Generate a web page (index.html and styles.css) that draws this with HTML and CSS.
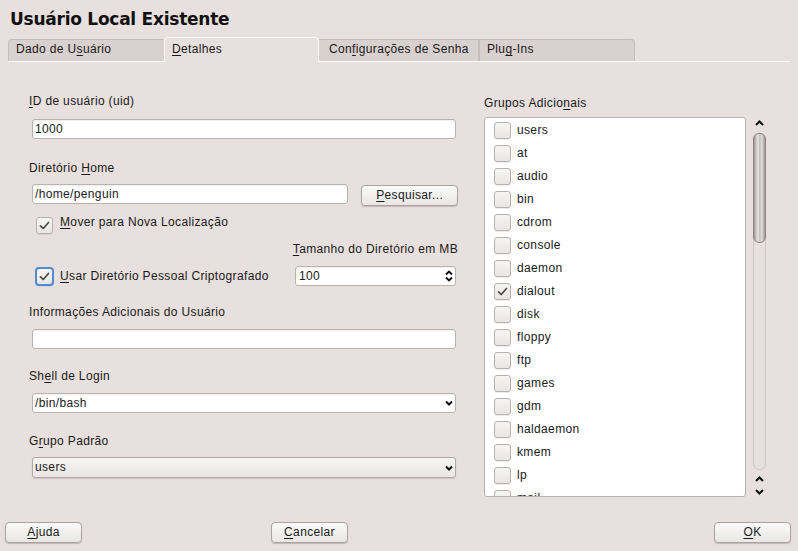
FILE: index.html
```html
<!DOCTYPE html>
<html lang="pt">
<head>
<meta charset="utf-8">
<title>Usuário Local Existente</title>
<link rel="stylesheet" href="styles.css">
</head>
<body>
<div class="win">
  <h1 class="title">Usuário Local Existente</h1>
  <div class="tabs">
    <div class="tab t1">Dado de U<u>s</u>uário</div>
    <div class="tab active t2"><u>D</u>etalhes</div>
    <div class="tab t3">Con<u>f</u>igurações de Senha</div>
    <div class="tab t4">Plu<u>g</u>-Ins</div>
  </div>
  <div class="panel">
    <div class="left">
      <div class="lbl"><u>I</u>D de usuário (uid)</div>
      <div class="input m10">1000</div>
      <div class="lbl m22">Diretório <u>H</u>ome</div>
      <div class="row m8">
        <div class="input short">/home/penguin</div>
        <div class="btn browse"><span><u>P</u>esquisar...</span></div>
      </div>
      <div class="cbrow m9">
        <div class="cbwrap"><div class="cb"><svg width="15" height="15" viewBox="0 0 15 15"><path d="M3.5 7.8 L6.2 10.5 L11.5 4.5" fill="none" stroke="#4b4b4b" stroke-width="1.7" stroke-linecap="round" stroke-linejoin="round"/></svg></div></div>
        <div class="cblbl"><u>M</u>over para Nova Localização</div>
      </div>
      <div class="lbl right-al m7"><u>T</u>amanho do Diretório em MB</div>
      <div class="row center m9">
        <div class="cbwrap"><div class="cb focus"><svg width="15" height="15" viewBox="0 0 15 15"><path d="M3.5 7.8 L6.2 10.5 L11.5 4.5" fill="none" stroke="#4b4b4b" stroke-width="1.7" stroke-linecap="round" stroke-linejoin="round"/></svg></div></div>
        <div class="cblbl"><u>U</u>sar Diretório Pessoal Criptografado</div>
        <div class="input spin"><span>100</span><svg width="8" height="14" viewBox="0 0 8 14"><path d="M1 5.5 L4 2.5 L7 5.5 M1 8.5 L4 11.5 L7 8.5" fill="none" stroke="#111" stroke-width="1.8"/></svg></div>
      </div>
      <div class="lbl m19">Informações Adicionais do Usuário</div>
      <div class="input m9"></div>
      <div class="lbl m20">Sh<u>e</u>ll de Login</div>
      <div class="input combo m9"><span>/bin/bash</span><svg width="8" height="6" viewBox="0 0 8 6"><path d="M1 1.5 L4 4.5 L7 1.5" fill="none" stroke="#111" stroke-width="2"/></svg></div>
      <div class="lbl m21">G<u>r</u>upo Padrão</div>
      <div class="input combo gray m8"><span>users</span><svg width="8" height="6" viewBox="0 0 8 6"><path d="M1 1.5 L4 4.5 L7 1.5" fill="none" stroke="#111" stroke-width="2"/></svg></div>
    </div>
    <div class="right">
      <div class="lbl">Grupos Adicio<u>n</u>ais</div>
      <div class="listrow">
        <div class="list">
          <div class="item"><div class="cb"></div><span>users</span></div>
          <div class="item"><div class="cb"></div><span>at</span></div>
          <div class="item"><div class="cb"></div><span>audio</span></div>
          <div class="item"><div class="cb"></div><span>bin</span></div>
          <div class="item"><div class="cb"></div><span>cdrom</span></div>
          <div class="item"><div class="cb"></div><span>console</span></div>
          <div class="item"><div class="cb"></div><span>daemon</span></div>
          <div class="item"><div class="cb"><svg width="15" height="15" viewBox="0 0 15 15"><path d="M3.5 7.8 L6.2 10.5 L11.5 4.5" fill="none" stroke="#4b4b4b" stroke-width="1.7" stroke-linecap="round" stroke-linejoin="round"/></svg></div><span>dialout</span></div>
          <div class="item"><div class="cb"></div><span>disk</span></div>
          <div class="item"><div class="cb"></div><span>floppy</span></div>
          <div class="item"><div class="cb"></div><span>ftp</span></div>
          <div class="item"><div class="cb"></div><span>games</span></div>
          <div class="item"><div class="cb"></div><span>gdm</span></div>
          <div class="item"><div class="cb"></div><span>haldaemon</span></div>
          <div class="item"><div class="cb"></div><span>kmem</span></div>
          <div class="item"><div class="cb"></div><span>lp</span></div>
          <div class="item"><div class="cb"></div><span>mail</span></div>
        </div>
        <div class="sb">
          <svg class="sb-up" width="9" height="6" viewBox="0 0 9 6"><path d="M1 5 L4.5 1.5 L8 5" fill="none" stroke="#111" stroke-width="2"/></svg>
          <div class="track"><div class="thumb"></div></div>
          <svg class="sb-up2" width="9" height="6" viewBox="0 0 9 6"><path d="M1 5 L4.5 1.5 L8 5" fill="none" stroke="#111" stroke-width="2"/></svg>
          <svg class="sb-down" width="9" height="6" viewBox="0 0 9 6"><path d="M1 1 L4.5 4.5 L8 1" fill="none" stroke="#111" stroke-width="2"/></svg>
        </div>
      </div>
    </div>
  </div>
  <div class="footer">
    <div class="btn fbtn"><span><u>A</u>juda</span></div>
    <div class="btn fbtn cancel"><span><u>C</u>ancelar</span></div>
    <div class="btn fbtn ok"><span><u>O</u>K</span></div>
  </div>
</div>
</body>
</html>
```

FILE: styles.css
```css
* { box-sizing: border-box; }
html, body { margin: 0; padding: 0; }
body {
  width: 798px;
  height: 551px;
  overflow: hidden;
  background: #e7e0de;
  font-family: "Liberation Sans", Arial, sans-serif;
  font-size: 12px;
  line-height: 15px;
  letter-spacing: 0.35px;
  color: #1a1a1a;
}
u { text-decoration: underline; text-underline-offset: 2px; }

.title {
  margin: 0;
  height: 29px;
  padding: 9px 0 0 10px;
  font-family: "DejaVu Sans", sans-serif;
  font-weight: bold;
  font-size: 17px;
  line-height: 20px;
  letter-spacing: -0.25px;
  color: #111;
}

.tabs {
  display: flex;
  align-items: flex-end;
  margin: 8px 8px 0 8px;
  height: 25px;
  border-bottom: 1px solid #fbf9f8;
}
.tab {
  height: 22px;
  padding: 2px 0 0 7px;
  background: #d8d1cf;
  border: 1px solid #c4bdbb;
  border-bottom: none;
  white-space: nowrap;
}
.t1 { width: 156px; border-right: none; border-radius: 4px 0 0 0; }
.t2 {
  width: 155px;
  height: 25px;
  margin-bottom: -1px;
  padding-top: 4px;
  padding-left: 7px;
  background: #e7e0de;
  border: 1px solid #fbf9f8;
  border-bottom: none;
  border-radius: 4px 4px 0 0;
}
.t3 { width: 160px; border-left: none; padding-left: 10px; }
.t4 { width: 156px; border-radius: 0 4px 0 0; }

.panel {
  display: flex;
  height: 460px;
  padding-left: 29px;
}
.left { width: 429px; padding-top: 32px; }
.right { width: 283px; margin-left: 26px; padding-top: 34px; }

.lbl { height: 15px; white-space: nowrap; }
.right-al { text-align: right; }
.m7 { margin-top: 7px; }
.m8 { margin-top: 8px; }
.m9 { margin-top: 9px; }
.m10 { margin-top: 10px; }
.m19 { margin-top: 19px; }
.m20 { margin-top: 20px; }
.m21 { margin-top: 21px; }
.m22 { margin-top: 22px; }

.input {
  display: flex;
  align-items: center;
  height: 20px;
  width: 424px;
  margin-left: 3px;
  padding: 0 2px 0 2px;
  background: #fff;
  border: 1px solid #b9b2b0;
  border-radius: 3px;
  box-shadow: inset 0 1px 1px rgba(0,0,0,0.06);
}
.input.short { width: 317px; }
.row { display: flex; align-items: flex-start; }
.row.center { align-items: center; height: 20px; }

.btn {
  display: flex;
  align-items: center;
  justify-content: center;
  height: 21px;
  background: linear-gradient(#fbfafa, #e9e6e5);
  border: 1px solid #a9a3a1;
  border-radius: 4px;
  box-shadow: 0 1px 1px rgba(0,0,0,0.18);
}
.browse { width: 97px; margin-left: 13px; margin-top: 1px; }

.cbrow { display: flex; align-items: flex-start; height: 20px; }
.cbrow .cbwrap { margin-top: 1px; }
.cbwrap {
  width: 19px;
  height: 19px;
  margin-left: 6px;
  display: flex;
  align-items: center;
  justify-content: center;
  flex: none;
}
.cb {
  width: 17px;
  height: 17px;
  flex: none;
  display: flex;
  align-items: center;
  justify-content: center;
  background: linear-gradient(#f6f5f4, #e8e6e5);
  border: 1px solid #b7b0ae;
  border-radius: 3px;
  box-shadow: 0 1px 0 rgba(0,0,0,0.07);
}
.cb.focus {
  width: 19px;
  height: 19px;
  border: 2px solid #4f8bd6;
  border-radius: 4px;
}
.cblbl { margin-left: 6px; white-space: nowrap; }

.spin {
  width: 161px;
  margin-left: auto;
  margin-right: 2px;
  justify-content: space-between;
  padding-left: 3px;
}
.combo { justify-content: space-between; }
.combo.gray {
  height: 21px;
  background: linear-gradient(#f7f5f5, #e9e6e5);
  border-color: #b0a9a7;
  box-shadow: 0 1px 1px rgba(0,0,0,0.12);
}

.listrow { display: flex; margin-top: 6px; }
.list {
  width: 262px;
  height: 380px;
  padding-top: 1px;
  overflow: hidden;
  background: #fff;
  border: 1px solid #b9b2b0;
  border-radius: 3px;
}
.item {
  display: flex;
  align-items: center;
  height: 23px;
  padding-left: 9px;
}
.item span { margin-left: 6px; }

.sb {
  width: 13px;
  margin-left: 7px;
  height: 380px;
  display: flex;
  flex-direction: column;
  align-items: center;
}
.sb-up { margin-top: 3px; flex: none; }
.track {
  width: 13px;
  height: 337px;
  margin-top: 7px;
  border: 1px solid #cdc6c4;
  border-radius: 6px;
  flex: none;
}
.thumb {
  width: 13px;
  height: 110px;
  margin: -1px 0 0 -1px;
  border-radius: 6px;
  border: 1px solid #8c8786;
  background: linear-gradient(to right, #9a9594, #cfcccb 22%, #e4e2e1 40%, #bdbab9 52%, #dedcdb 68%, #c3c0bf 84%, #9a9594);
}
.sb-up2 { margin-top: 6px; flex: none; }
.sb-down { margin-top: 7px; flex: none; }

.footer {
  display: flex;
  padding-left: 5px;
  padding-right: 7px;
}
.fbtn { width: 77px; }
.cancel { margin-left: 189px; }
.ok { margin-left: auto; }
```
